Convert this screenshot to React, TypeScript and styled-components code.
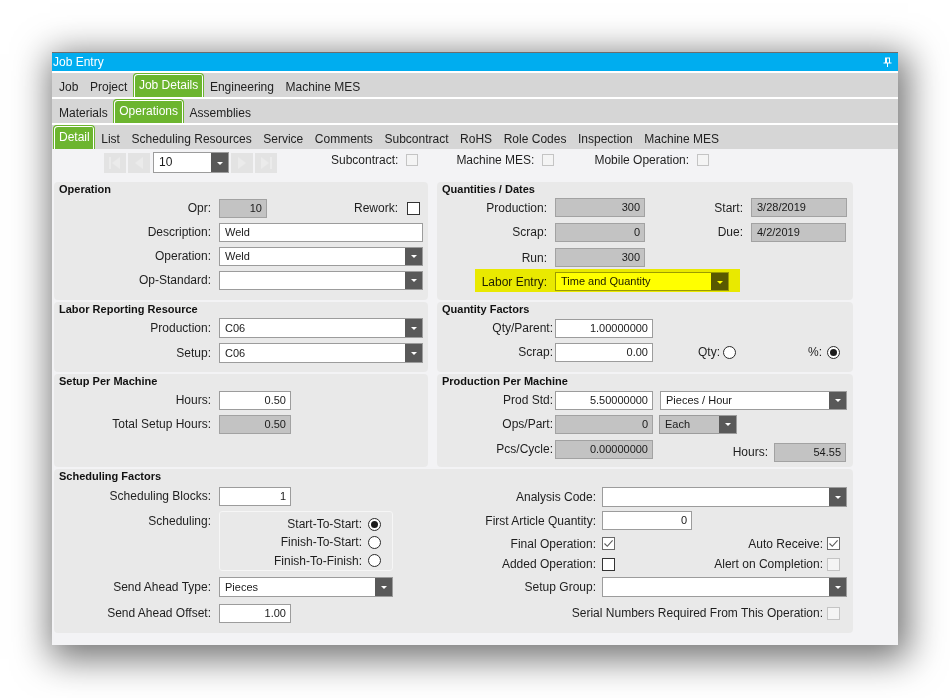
import React from "react";
import styled, { createGlobalStyle, css } from "styled-components";

const GlobalStyle = createGlobalStyle`
  html, body { margin: 0; padding: 0; background: #ffffff; }
  body {
    font-family: "Liberation Sans", Arial, Helvetica, sans-serif;
    font-size: 12px;
    color: #222;
  }
  * { box-sizing: border-box; }
`;

const Page = styled.div`
  width: 950px;
  height: 698px;
  padding: 52px 0 0 52px;
  overflow: hidden;
`;

const Window = styled.div`
  width: 846px;
  height: 593px;
  background: #f3f3f5;
  border-top: 1px solid #6c6c6c;
  box-shadow: 4px 8px 34px 6px rgba(0, 0, 0, 0.55);
  display: flex;
  flex-direction: column;
`;

const TitleBar = styled.div`
  height: 18px;
  flex-shrink: 0;
  background: #00adef;
  color: #fff;
  display: flex;
  align-items: center;
  justify-content: space-between;
  padding: 0 6px 0 1px;
  font-size: 12px;
`;

const TabStack = styled.div`
  background: #fff;
  padding-top: 2px;
  display: flex;
  flex-direction: column;
  gap: 2px;
`;

const TabBar = styled.div`
  height: 24px;
  background: #d6d6d6;
  display: flex;
  align-items: stretch;
  padding-left: 1px;
`;

const Tab = styled.div<{ $active?: boolean }>`
  display: flex;
  align-items: center;
  padding: 3px 5.6px 0 6px;
  color: #222;
  white-space: nowrap;
  ${(p) =>
    p.$active &&
    css`
      padding: 0 4.6px 1px 5px;
      background: #6cb52f;
      color: #fff;
      border: 1px solid #6cb52f;
      border-bottom: none;
      box-shadow: inset 1px 1px 0 #fff, inset -1px 0 0 #fff;
      border-radius: 4px 4px 0 0;
    `}
`;

const Content = styled.div`
  flex: 1;
  display: flex;
  flex-direction: column;
  padding: 3px 0 0 2px;
`;

const NavRow = styled.div`
  display: flex;
  align-items: center;
  height: 21px;
  margin-left: 50px;
`;

const NavButton = styled.div<{ $gap?: number; $ml?: number }>`
  width: 22px;
  height: 20px;
  background: #e3e3e3;
  display: flex;
  align-items: center;
  justify-content: center;
  margin-right: ${(p) => p.$gap ?? 0}px;
  margin-left: ${(p) => p.$ml ?? 0}px;
  flex-shrink: 0;
`;

const CheckGroup = styled.div<{ $ml: number }>`
  display: flex;
  align-items: center;
  height: 14px;
  align-self: flex-start;
  margin-top: 1px;
  margin-left: ${(p) => p.$ml}px;
`;

const PanelGrid = styled.div`
  margin-top: 9px;
  display: grid;
  grid-template-columns: 374px 416px;
  grid-template-rows: 118px 70px 93px 164px;
  column-gap: 9px;
  row-gap: 2px;
`;

const Panel = styled.div<{ $pr?: number; $wide?: boolean }>`
  background: #e9e9e9;
  border-radius: 4px;
  display: flex;
  flex-direction: column;
  padding-right: ${(p) => p.$pr ?? 6}px;
  ${(p) => p.$wide && css`grid-column: 1 / -1;`}
`;

const SectionTitle = styled.div`
  font-weight: bold;
  font-size: 11px;
  height: 14px;
  line-height: 14px;
  padding-left: 5px;
  color: #111;
  flex-shrink: 0;
`;

const Row = styled.div<{ $h?: number; $mt?: number; $end?: boolean }>`
  display: flex;
  align-items: center;
  height: ${(p) => p.$h ?? 24}px;
  margin-top: ${(p) => p.$mt ?? 0}px;
  position: relative;
  flex-shrink: 0;
  ${(p) => p.$end && css`justify-content: flex-end;`}
`;

const TopRow = styled.div<{ $mt?: number }>`
  display: flex;
  align-items: flex-start;
  margin-top: ${(p) => p.$mt ?? 0}px;
`;

const Label = styled.span<{ $w?: number; $gap?: number; $ml?: number; $pt?: number }>`
  ${(p) => (p.$w ? `width: ${p.$w}px; text-align: right;` : "")}
  margin-right: ${(p) => p.$gap ?? 8}px;
  margin-left: ${(p) => p.$ml ?? 0}px;
  padding-top: ${(p) => p.$pt ?? 0}px;
  line-height: 14px;
  flex-shrink: 0;
  white-space: nowrap;
  color: #1e1e1e;
`;

const Spacer = styled.div`
  flex: 1;
`;

const TextBox = styled.div<{ $w: number; $ro?: boolean; $right?: boolean; $h?: number; $ml?: number; $mr?: number }>`
  width: ${(p) => p.$w}px;
  height: ${(p) => p.$h ?? 19}px;
  margin-left: ${(p) => p.$ml ?? 0}px;
  margin-right: ${(p) => p.$mr ?? 0}px;
  border: 1px solid ${(p) => (p.$ro ? "#a2a2a2" : "#9c9c9c")};
  background: ${(p) => (p.$ro ? "#c3c3c3" : "#ffffff")};
  font-size: 11px;
  display: flex;
  align-items: center;
  justify-content: ${(p) => (p.$right ? "flex-end" : "flex-start")};
  padding: 0 4px 1px 5px;
  color: #1a1a1a;
  flex-shrink: 0;
  white-space: nowrap;
`;

const ComboBox = styled.div<{ $w: number; $h?: number; $ro?: boolean; $ml?: number; $fs?: number }>`
  width: ${(p) => p.$w}px;
  height: ${(p) => p.$h ?? 19}px;
  margin-left: ${(p) => p.$ml ?? 0}px;
  border: 1px solid #9c9c9c;
  background: ${(p) => (p.$ro ? "#c3c3c3" : "#ffffff")};
  display: flex;
  align-items: stretch;
  flex-shrink: 0;
  font-size: ${(p) => p.$fs ?? 11}px;
`;

const ComboText = styled.div`
  flex: 1;
  display: flex;
  align-items: center;
  padding: 0 4px 1px 5px;
  color: #1a1a1a;
  white-space: nowrap;
  overflow: hidden;
`;

const DropButton = styled.div`
  width: 17px;
  background: #595959;
  display: flex;
  align-items: center;
  justify-content: center;
  flex-shrink: 0;
`;

const Arrow = styled.span`
  width: 0;
  height: 0;
  border-left: 3px solid transparent;
  border-right: 3px solid transparent;
  border-top: 3px solid #ffffff;
  margin-top: 1px;
`;

const CheckBoxBox = styled.span<{ $light?: boolean; $size?: number; $mr?: number; $grey?: boolean }>`
  width: ${(p) => p.$size ?? 13}px;
  height: ${(p) => p.$size ?? 13}px;
  border: 1px solid ${(p) => (p.$light ? "#c4c4c4" : p.$grey ? "#6a6a6a" : "#333333")};
  background: ${(p) => (p.$light ? "#f4f4f4" : "#ffffff")};
  margin-right: ${(p) => p.$mr ?? 0}px;
  display: flex;
  align-items: center;
  justify-content: center;
  flex-shrink: 0;
`;

const RadioCircle = styled.span<{ $on?: boolean; $ml?: number; $mr?: number }>`
  width: 13px;
  height: 13px;
  border-radius: 50%;
  border: 1px solid #2a2a2a;
  background: #ffffff;
  margin-left: ${(p) => p.$ml ?? 0}px;
  margin-right: ${(p) => p.$mr ?? 0}px;
  display: flex;
  align-items: center;
  justify-content: center;
  flex-shrink: 0;
  ${(p) =>
    p.$on &&
    css`
      &::after {
        content: "";
        width: 7px;
        height: 7px;
        border-radius: 50%;
        background: #1c1c1c;
      }
    `}
`;

const Highlight = styled.div`
  position: absolute;
  left: 38px;
  top: -1px;
  width: 265px;
  height: 23px;
  background: #ffff00;
  mix-blend-mode: multiply;
  pointer-events: none;
`;

const SchedBody = styled.div`
  display: grid;
  grid-template-columns: 339px 1fr;
`;

const Column = styled.div<{ $pt?: number }>`
  display: flex;
  flex-direction: column;
  padding-top: ${(p) => p.$pt ?? 0}px;
`;

const RadioBox = styled.div`
  width: 174px;
  height: 60px;
  border: 1px solid #f6f6f6;
  border-radius: 3px;
  background: #e9e9e9;
  display: flex;
  flex-direction: column;
  align-items: flex-end;
  padding: 3px 11px 0 0;
`;

const RadioRow = styled.div`
  display: flex;
  align-items: center;
  height: 20px;
`;

const RightGroup = styled.div<{ $mt?: number }>`
  display: flex;
  align-items: center;
  margin-top: ${(p) => p.$mt ?? 0}px;
`;

const Pin = () => (
  <svg width="9" height="10" viewBox="0 0 9 10">
    <rect x="2" y="0.5" width="5" height="1" fill="#fff" />
    <rect x="2" y="1" width="2" height="5" fill="#fff" />
    <rect x="6" y="1" width="1" height="5" fill="#fff" />
    <rect x="0.5" y="5.5" width="8" height="1" fill="#fff" />
    <rect x="4" y="6" width="1" height="4" fill="#fff" />
  </svg>
);

const Check = () => (
  <svg width="11" height="11" viewBox="0 0 11 11">
    <path d="M1.5 5.5 L4.3 8.3 L9.6 2.3" fill="none" stroke="#5a5a5a" strokeWidth="1.1" />
  </svg>
);

const NavGlyph = ({ kind }: { kind: "first" | "prev" | "next" | "last" }) => {
  const c = "#ebebeb";
  return (
    <svg width="14" height="16" viewBox="0 0 14 16">
      {kind === "first" && (
        <>
          <rect x="1" y="2" width="2" height="12" fill={c} />
          <polygon points="12,2 4,8 12,14" fill={c} />
        </>
      )}
      {kind === "prev" && <polygon points="11,2 3,8 11,14" fill={c} />}
      {kind === "next" && <polygon points="3,2 11,8 3,14" fill={c} />}
      {kind === "last" && (
        <>
          <polygon points="2,2 10,8 2,14" fill={c} />
          <rect x="11" y="2" width="2" height="12" fill={c} />
        </>
      )}
    </svg>
  );
};

const Combo = ({
  w,
  h,
  text,
  ro,
  ml,
  fs,
}: {
  w: number;
  h?: number;
  text?: string;
  ro?: boolean;
  ml?: number;
  fs?: number;
}) => (
  <ComboBox $w={w} $h={h} $ro={ro} $ml={ml} $fs={fs}>
    <ComboText>{text}</ComboText>
    <DropButton>
      <Arrow />
    </DropButton>
  </ComboBox>
);

const CheckBox = ({
  checked,
  light,
  grey,
  size,
  mr,
}: {
  checked?: boolean;
  light?: boolean;
  grey?: boolean;
  size?: number;
  mr?: number;
}) => (
  <CheckBoxBox $light={light} $grey={grey} $size={size} $mr={mr}>
    {checked && <Check />}
  </CheckBoxBox>
);

const L = 157; // left label column width
const QD = 110; // quantities/dates label width
const QF = 116; // quantity factor label width
const SR = 203; // scheduling right label width

export default function App() {
  return (
    <>
      <GlobalStyle />
      <Page>
        <Window>
          <TitleBar>
            <span>Job Entry</span>
            <Pin />
          </TitleBar>
          <TabStack>
            <TabBar>
              <Tab>Job</Tab>
              <Tab>Project</Tab>
              <Tab $active>Job Details</Tab>
              <Tab>Engineering</Tab>
              <Tab>Machine MES</Tab>
            </TabBar>
            <TabBar>
              <Tab>Materials</Tab>
              <Tab $active>Operations</Tab>
              <Tab>Assemblies</Tab>
            </TabBar>
            <TabBar>
              <Tab $active>Detail</Tab>
              <Tab>List</Tab>
              <Tab>Scheduling Resources</Tab>
              <Tab>Service</Tab>
              <Tab>Comments</Tab>
              <Tab>Subcontract</Tab>
              <Tab>RoHS</Tab>
              <Tab>Role Codes</Tab>
              <Tab>Inspection</Tab>
              <Tab>Machine MES</Tab>
            </TabBar>
          </TabStack>
          <Content>
            <NavRow>
              <NavButton $gap={2}>
                <NavGlyph kind="first" />
              </NavButton>
              <NavButton $gap={3}>
                <NavGlyph kind="prev" />
              </NavButton>
              <Combo w={76} h={21} text="10" fs={12} />
              <NavButton $gap={2} $ml={2}>
                <NavGlyph kind="next" />
              </NavButton>
              <NavButton>
                <NavGlyph kind="last" />
              </NavButton>
              <CheckGroup $ml={54}>
                <Label>Subcontract:</Label>
                <CheckBox light size={12} />
              </CheckGroup>
              <CheckGroup $ml={38}>
                <Label>Machine MES:</Label>
                <CheckBox light size={12} />
              </CheckGroup>
              <CheckGroup $ml={40}>
                <Label>Mobile Operation:</Label>
                <CheckBox light size={12} />
              </CheckGroup>
            </NavRow>

            <PanelGrid>
              {/* Operation */}
              <Panel $pr={5}>
                <SectionTitle>Operation</SectionTitle>
                <Row $h={24}>
                  <Label $w={L}>Opr:</Label>
                  <TextBox $w={48} $ro $right>
                    10
                  </TextBox>
                  <Spacer />
                  <Label $gap={9}>Rework:</Label>
                  <CheckBox mr={3} />
                </Row>
                <Row $h={24}>
                  <Label $w={L}>Description:</Label>
                  <TextBox $w={204}>Weld</TextBox>
                </Row>
                <Row $h={24}>
                  <Label $w={L}>Operation:</Label>
                  <Combo w={204} text="Weld" />
                </Row>
                <Row $h={24}>
                  <Label $w={L}>Op-Standard:</Label>
                  <Combo w={204} />
                </Row>
              </Panel>

              {/* Quantities / Dates */}
              <Panel>
                <SectionTitle>Quantities / Dates</SectionTitle>
                <Row $h={23}>
                  <Label $w={QD}>Production:</Label>
                  <TextBox $w={90} $ro $right>
                    300
                  </TextBox>
                  <Spacer />
                  <Label>Start:</Label>
                  <TextBox $w={96} $ro>
                    3/28/2019
                  </TextBox>
                </Row>
                <Row $h={26}>
                  <Label $w={QD}>Scrap:</Label>
                  <TextBox $w={90} $ro $right>
                    0
                  </TextBox>
                  <Spacer />
                  <Label>Due:</Label>
                  <TextBox $w={95} $ro $mr={1}>
                    4/2/2019
                  </TextBox>
                </Row>
                <Row $h={25}>
                  <Label $w={QD}>Run:</Label>
                  <TextBox $w={90} $ro $right>
                    300
                  </TextBox>
                </Row>
                <Row $h={23}>
                  <Label $w={QD}>Labor Entry:</Label>
                  <Combo w={174} text="Time and Quantity" />
                  <Highlight />
                </Row>
              </Panel>

              {/* Labor Reporting Resource */}
              <Panel $pr={5}>
                <SectionTitle>Labor Reporting Resource</SectionTitle>
                <Row $h={24}>
                  <Label $w={L}>Production:</Label>
                  <Combo w={204} h={20} text="C06" />
                </Row>
                <Row $h={26}>
                  <Label $w={L}>Setup:</Label>
                  <Combo w={204} h={20} text="C06" />
                </Row>
              </Panel>

              {/* Quantity Factors */}
              <Panel>
                <SectionTitle>Quantity Factors</SectionTitle>
                <Row $h={24}>
                  <Label $w={QF} $gap={2}>
                    Qty/Parent:
                  </Label>
                  <TextBox $w={98} $right>
                    1.00000000
                  </TextBox>
                </Row>
                <Row $h={24}>
                  <Label $w={QF} $gap={2}>
                    Scrap:
                  </Label>
                  <TextBox $w={98} $right>
                    0.00
                  </TextBox>
                  <Label $ml={45} $gap={3}>
                    Qty:
                  </Label>
                  <RadioCircle />
                  <Spacer />
                  <Label $gap={5}>%:</Label>
                  <RadioCircle $on $mr={7} />
                </Row>
              </Panel>

              {/* Setup Per Machine */}
              <Panel $pr={5}>
                <SectionTitle>Setup Per Machine</SectionTitle>
                <Row $h={24}>
                  <Label $w={L}>Hours:</Label>
                  <TextBox $w={72} $right>
                    0.50
                  </TextBox>
                </Row>
                <Row $h={24}>
                  <Label $w={L}>Total Setup Hours:</Label>
                  <TextBox $w={72} $ro $right>
                    0.50
                  </TextBox>
                </Row>
              </Panel>

              {/* Production Per Machine */}
              <Panel>
                <SectionTitle>Production Per Machine</SectionTitle>
                <Row $h={24}>
                  <Label $w={QF} $gap={2}>
                    Prod Std:
                  </Label>
                  <TextBox $w={98} $right>
                    5.50000000
                  </TextBox>
                  <Combo w={187} ml={7} text="Pieces / Hour" />
                </Row>
                <Row $h={24}>
                  <Label $w={QF} $gap={2}>
                    Ops/Part:
                  </Label>
                  <TextBox $w={98} $ro $right>
                    0
                  </TextBox>
                  <Combo w={78} ml={6} ro text="Each" />
                </Row>
                <Row $h={26}>
                  <Label $w={QF} $gap={2}>
                    Pcs/Cycle:
                  </Label>
                  <TextBox $w={98} $ro $right>
                    0.00000000
                  </TextBox>
                  <Spacer />
                  <RightGroup $mt={6}>
                    <Label $gap={6}>Hours:</Label>
                    <TextBox $w={72} $ro $right $mr={1}>
                      54.55
                    </TextBox>
                  </RightGroup>
                </Row>
              </Panel>

              {/* Scheduling Factors */}
              <Panel $wide>
                <SectionTitle>Scheduling Factors</SectionTitle>
                <SchedBody>
                  <Column $pt={1}>
                    <Row $h={24}>
                      <Label $w={L}>Scheduling Blocks:</Label>
                      <TextBox $w={72} $right>
                        1
                      </TextBox>
                    </Row>
                    <TopRow $mt={3}>
                      <Label $w={L} $pt={3}>
                        Scheduling:
                      </Label>
                      <RadioBox>
                        <RadioRow>
                          <Label $gap={6}>Start-To-Start:</Label>
                          <RadioCircle $on />
                        </RadioRow>
                        <RadioRow>
                          <Label $gap={6}>Finish-To-Start:</Label>
                          <RadioCircle />
                        </RadioRow>
                        <RadioRow>
                          <Label $gap={6}>Finish-To-Finish:</Label>
                          <RadioCircle />
                        </RadioRow>
                      </RadioBox>
                    </TopRow>
                    <Row $h={26} $mt={3}>
                      <Label $w={L}>Send Ahead Type:</Label>
                      <Combo w={174} h={20} text="Pieces" />
                    </Row>
                    <Row $h={26}>
                      <Label $w={L}>Send Ahead Offset:</Label>
                      <TextBox $w={72} $right>
                        1.00
                      </TextBox>
                    </Row>
                  </Column>
                  <Column $pt={2}>
                    <Row $h={24}>
                      <Label $w={SR} $gap={6}>
                        Analysis Code:
                      </Label>
                      <Combo w={245} h={20} />
                    </Row>
                    <Row $h={23}>
                      <Label $w={SR} $gap={6}>
                        First Article Quantity:
                      </Label>
                      <TextBox $w={90} $right>
                        0
                      </TextBox>
                    </Row>
                    <Row $h={23}>
                      <Label $w={SR} $gap={6}>
                        Final Operation:
                      </Label>
                      <CheckBox checked grey />
                      <Spacer />
                      <Label $gap={4}>Auto Receive:</Label>
                      <CheckBox checked grey mr={7} />
                    </Row>
                    <Row $h={18}>
                      <Label $w={SR} $gap={6}>
                        Added Operation:
                      </Label>
                      <CheckBox />
                      <Spacer />
                      <Label $gap={4}>Alert on Completion:</Label>
                      <CheckBox light mr={7} />
                    </Row>
                    <Row $h={28}>
                      <Label $w={SR} $gap={6}>
                        Setup Group:
                      </Label>
                      <Combo w={245} h={20} />
                    </Row>
                    <Row $h={24} $end>
                      <Label $gap={4}>Serial Numbers Required From This Operation:</Label>
                      <CheckBox light mr={7} />
                    </Row>
                  </Column>
                </SchedBody>
              </Panel>
            </PanelGrid>
          </Content>
        </Window>
      </Page>
    </>
  );
}
